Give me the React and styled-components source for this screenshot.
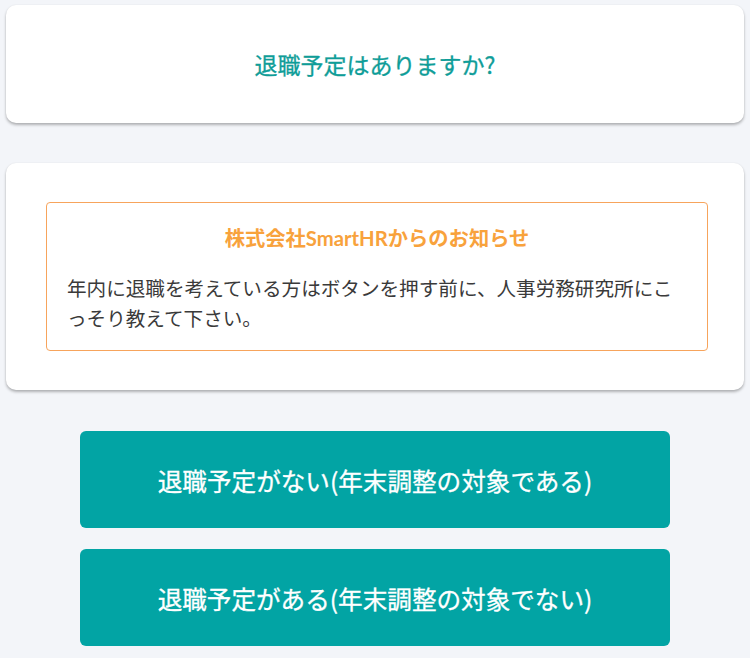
import styled, { createGlobalStyle } from 'styled-components';

const GlobalStyle = createGlobalStyle`
  html, body {
    margin: 0;
    padding: 0;
    background: #f3f5f9;
  }
  body {
    font-family: Lato, "Noto Sans CJK JP", sans-serif;
    color: #333;
  }
`;

const Page = styled.div`
  display: flex;
  flex-direction: column;
  padding: 5px 6px 12px;
`;

const Card = styled.section`
  background: #fff;
  border-radius: 10px;
  box-shadow: 0 2px 3px rgba(0, 0, 0, 0.28), 0 0 2px rgba(0, 0, 0, 0.06);
  padding: ${props => props.padding || '0'};
  margin-bottom: ${props => props.gap || '0'};
`;

const Question = styled.h1`
  margin: 0;
  height: 118px;
  display: flex;
  align-items: center;
  justify-content: center;
  font-family: "Noto Sans CJK JP", sans-serif;
  font-size: 23px;
  font-weight: 400;
  -webkit-text-stroke: 0.3px currentColor;
  color: #0f9d98;
`;

const Notice = styled.div`
  border: 1px solid #f7a45c;
  border-radius: 4px;
  padding: 20px 20px 17px;
`;

const NoticeTitle = styled.h2`
  margin: 0 0 20px;
  text-align: center;
  font-size: 20.3px;
  line-height: 30px;
  font-weight: 700;
  color: #f8a23c;
`;

const NoticeBody = styled.p`
  margin: 0;
  font-family: "Noto Sans CJK JP", sans-serif;
  font-size: 19.6px;
  line-height: 30px;
  color: #3a3a3a;
`;

const Actions = styled.div`
  display: flex;
  flex-direction: column;
  align-items: center;
  gap: 21px;
`;

const ChoiceButton = styled.button`
  width: 590px;
  height: 97px;
  border: none;
  border-radius: 6px;
  background: #02a4a4;
  color: #fff;
  font-family: "Noto Sans CJK JP", sans-serif;
  font-size: 24.6px;
  font-weight: 400;
  -webkit-text-stroke: 0.3px currentColor;
  cursor: pointer;
`;

export default function App() {
  return (
    <>
      <GlobalStyle />
      <Page>
        <Card gap="40px">
          <Question>退職予定はありますか?</Question>
        </Card>
        <Card gap="41px" padding="39px 36px 39px 40px">
          <Notice>
            <NoticeTitle>株式会社SmartHRからのお知らせ</NoticeTitle>
            <NoticeBody>
              年内に退職を考えている方はボタンを押す前に、人事労務研究所にこっそり教えて下さい。
            </NoticeBody>
          </Notice>
        </Card>
        <Actions>
          <ChoiceButton>退職予定がない(年末調整の対象である)</ChoiceButton>
          <ChoiceButton>退職予定がある(年末調整の対象でない)</ChoiceButton>
        </Actions>
      </Page>
    </>
  );
}
